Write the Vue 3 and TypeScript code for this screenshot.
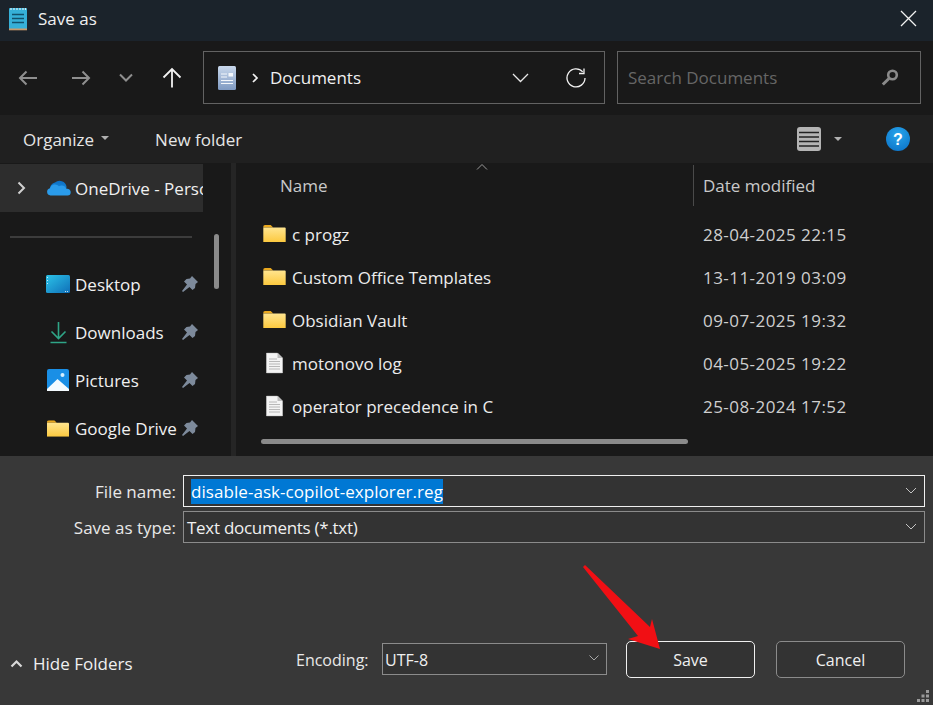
<script setup lang="ts">
const places = [
  { name: 'Desktop', icon: 'desktop' },
  { name: 'Downloads', icon: 'downloads' },
  { name: 'Pictures', icon: 'pictures' },
  { name: 'Google Drive', icon: 'folder' },
]

const files = [
  { name: 'c progz', date: '28-04-2025 22:15', folder: true },
  { name: 'Custom Office Templates', date: '13-11-2019 03:09', folder: true },
  { name: 'Obsidian Vault', date: '09-07-2025 19:32', folder: true },
  { name: 'motonovo log', date: '04-05-2025 19:22', folder: false },
  { name: 'operator precedence in C', date: '25-08-2024 17:52', folder: false },
]
</script>

<template>
  <div class="dialog">
    <svg width="0" height="0" class="defs">
      <defs>
        <linearGradient id="folderFill" x1="0" y1="0" x2="0" y2="1">
          <stop offset="0" stop-color="#ffe58f" />
          <stop offset="1" stop-color="#fcc93f" />
        </linearGradient>
        <linearGradient id="cloudFill" x1="0" y1="0" x2="0" y2="1">
          <stop offset="0" stop-color="#0c6fc4" />
          <stop offset="1" stop-color="#1b8ede" />
        </linearGradient>
        <linearGradient id="desktopFill" x1="0" y1="0" x2="1" y2="1">
          <stop offset="0" stop-color="#2cc3e8" />
          <stop offset="1" stop-color="#0f6fb8" />
        </linearGradient>
        <linearGradient id="docFill" x1="0" y1="0" x2="0" y2="1">
          <stop offset="0" stop-color="#c9d8ec" />
          <stop offset="1" stop-color="#7f9ac2" />
        </linearGradient>
        <radialGradient id="helpFill" cx="0.5" cy="0.3" r="0.8">
          <stop offset="0" stop-color="#27a5ec" />
          <stop offset="1" stop-color="#0b72c7" />
        </radialGradient>
        <symbol id="folder" viewBox="0 0 24 18">
          <path d="M0 2C0 .8.8 0 2 0h6l2.600 2.600H0z" fill="#e9a81f" />
          <path d="M0 2.600h23c.6 0 1 .4 1 1V18H0z" fill="url(#folderFill)" />
        </symbol>
        <symbol id="pin" viewBox="0 0 16 16">
          <path d="M10 0l6 6-2.500 2-.5 4-2.500 2-3-3L1 16l-1-1 5-6.500-3-3L4.500 3 8 2.500z" fill="#7d8a9b" />
        </symbol>
        <symbol id="doc" viewBox="0 0 17 21">
          <path d="M.5.5h11l5 5v15H.5z" fill="#f4f4f4" stroke="#c4c4c4" stroke-width=".7" />
          <path d="M11.500.5v5h5z" fill="#bdbdbd" />
          <path d="M3 6.500h8M3 9h11M3 11.500h11M3 14h11M3 16.500h11" stroke="#a8a8a8" stroke-width=".8" />
        </symbol>
      </defs>
    </svg>

    <header class="title-bar">
      <svg class="app-icon" width="20" height="24" viewBox="0 0 20 24">
        <rect x="1" y="1" width="18" height="22" rx="1" fill="#36b0d8" />
        <rect x="1" y="21.500" width="18" height="1.800" fill="#c99a6b" />
        <path d="M3 1v2M6 1v2M9 1v2M12 1v2M15 1v2M17.500 1v2" stroke="#d8eef5" stroke-width="1.200" />
        <path d="M4 7.500h12M4 11.500h12M4 15.500h12" stroke="#11506b" stroke-width="1.300" />
      </svg>
      <span class="title">Save as</span>
      <svg class="close" width="17" height="17" viewBox="0 0 17 17">
        <path d="M1 1l15 15M16 1L1 16" stroke="#f2f2f2" stroke-width="1.300" fill="none" />
      </svg>
    </header>

    <div class="nav-bar">
      <div class="nav-buttons">
        <svg class="nav-back" width="20" height="16" viewBox="0 0 20 16">
          <path d="M19 8H2M8.500 1.500L2 8l6.500 6.500" stroke="#8f8f8f" stroke-width="2" fill="none" />
        </svg>
        <svg class="nav-forward" width="20" height="16" viewBox="0 0 20 16">
          <path d="M1 8h17M11.500 1.500L18 8l-6.500 6.500" stroke="#8f8f8f" stroke-width="2" fill="none" />
        </svg>
        <svg class="nav-down" width="14" height="9" viewBox="0 0 14 9">
          <path d="M1 1.500l6 6 6-6" stroke="#8f8f8f" stroke-width="2" fill="none" />
        </svg>
        <svg class="nav-up" width="20" height="21" viewBox="0 0 20 21">
          <path d="M10 20.500V2M1.500 10.500L10 2l8.500 8.500" stroke="#f2f2f2" stroke-width="1.800" fill="none" />
        </svg>
      </div>
      <div class="address">
        <svg width="18" height="24" viewBox="0 0 18 24">
          <rect width="18" height="24" rx="1.500" fill="url(#docFill)" />
          <rect x="10.500" y="7" width="4.500" height="3.500" fill="#f4f7fb" />
          <path d="M3 8h6M3 11h6M3 14.500h12M3 17.500h12" stroke="#f4f7fb" stroke-width="1" />
        </svg>
        <svg class="crumb" width="7" height="10" viewBox="0 0 7 10">
          <path d="M1 1l4 4-4 4" stroke="#f2f2f2" stroke-width="1.700" fill="none" />
        </svg>
        <span class="address-text">Documents</span>
        <svg class="address-chevron" width="17" height="10" viewBox="0 0 17 10">
          <path d="M1 1l7.500 7.500L16 1" stroke="#e8e8e8" stroke-width="1.300" fill="none" />
        </svg>
        <svg class="refresh" width="20" height="20" viewBox="0 0 20 20">
          <path d="M16.700 3.900A9 9 0 1 0 19 10" stroke="#f2f2f2" stroke-width="1.300" fill="none" />
          <path d="M18 .5v5h-5" stroke="#f2f2f2" stroke-width="1.300" fill="none" />
        </svg>
      </div>
      <div class="search">
        <span class="search-text">Search Documents</span>
        <svg width="18" height="17" viewBox="0 0 18 17">
          <circle cx="11.500" cy="6" r="4.300" stroke="#8a8a8a" stroke-width="2.600" fill="none" />
          <path d="M8 9.500L1.800 15.500" stroke="#8a8a8a" stroke-width="3" />
        </svg>
      </div>
    </div>

    <div class="command-bar">
      <span class="command">Organize</span>
      <i class="caret organize-caret"></i>
      <span class="command new-folder">New folder</span>
      <svg class="view-icon" width="24" height="24" viewBox="0 0 24 24">
        <rect width="24" height="24" rx="3" fill="#b4b4b4" />
        <path d="M2 5.500h20M2 10h20M2 14.500h20M2 19h20" stroke="#222" stroke-width="1.300" />
      </svg>
      <i class="caret view-caret"></i>
      <svg class="help" width="24" height="24" viewBox="0 0 24 24">
        <circle cx="12" cy="12" r="12" fill="url(#helpFill)" />
        <text x="12" y="17.500" text-anchor="middle" class="help-mark">?</text>
      </svg>
    </div>

    <main class="browser">
      <aside class="sidebar">
        <div class="side-list">
          <div class="one-drive">
            <svg class="expand" width="9" height="14" viewBox="0 0 9 14">
              <path d="M1.500 1.500L7 7l-5.500 5.500" stroke="#d0d0d0" stroke-width="2" fill="none" />
            </svg>
            <svg class="cloud" width="25" height="16" viewBox="0 0 25 16">
              <path d="M4 10A6.500 6.500 0 0 1 9 2.500 7 7 0 0 1 20.500 6.500L20 13H5z" fill="url(#cloudFill)" />
              <path d="M4.500 15.500A3.700 3.700 0 0 1 4 8.200 5.200 5.200 0 0 1 13 6.300 5 5 0 0 1 20.300 8.800 3.400 3.400 0 0 1 24.700 12.300 3.200 3.200 0 0 1 21.500 15.500z" fill="#2a9bea" />
            </svg>
            <span class="one-drive-name">OneDrive - Personal</span>
          </div>
          <hr class="side-rule" />
          <div v-for="place in places" :key="place.name" class="place">
            <span class="place-icon">
              <svg v-if="place.icon === 'desktop'" width="24" height="18" viewBox="0 0 24 18">
                <rect width="24" height="18" rx="1.500" fill="url(#desktopFill)" />
                <path d="M1.500 2v.8M1.500 5v.8M1.500 8v.8M19.500 16v.8M21.500 16v.8" stroke="#eaf8ff" stroke-width="1" />
              </svg>
              <svg v-else-if="place.icon === 'downloads'" width="17" height="23" viewBox="0 0 17 23">
                <path d="M8.500 1v16M1.500 10.500l7 7 7-7M.5 21.500h16" stroke="#2fa587" stroke-width="1.600" fill="none" />
              </svg>
              <svg v-else-if="place.icon === 'pictures'" width="22" height="22" viewBox="0 0 22 22">
                <rect width="22" height="22" rx="2" fill="#1a8fe6" />
                <circle cx="15.500" cy="6" r="2" fill="#d6efff" />
                <path d="M0 20l10.500-10L22 20v2H0z" fill="#f4fbff" />
              </svg>
              <svg v-else width="22" height="17" viewBox="0 0 24 18">
                <use href="#folder" />
              </svg>
            </span>
            <span class="place-name">{{ place.name }}</span>
            <svg class="pin" width="16" height="16" viewBox="0 0 16 16">
              <use href="#pin" />
            </svg>
          </div>
        </div>
        <div class="side-track">
          <div class="side-thumb"></div>
        </div>
      </aside>

      <section class="files">
        <div class="file-header">
          <span class="col-name">Name</span>
          <svg class="sort" width="12" height="6" viewBox="0 0 12 6">
            <path d="M1 5.500l5-5 5 5" stroke="#9a9a9a" stroke-width="1" fill="none" />
          </svg>
          <span class="col-date">Date modified</span>
        </div>
        <ul class="file-list">
          <li v-for="file in files" :key="file.name" class="file-row">
            <span class="file-icon">
              <svg v-if="file.folder" width="23" height="17" viewBox="0 0 24 18">
                <use href="#folder" />
              </svg>
              <svg v-else width="17" height="22" viewBox="0 0 17 21">
                <use href="#doc" />
              </svg>
            </span>
            <span class="file-name">{{ file.name }}</span>
            <span class="file-date">{{ file.date }}</span>
          </li>
        </ul>
        <div class="h-thumb"></div>
      </section>
    </main>

    <footer class="bottom">
      <div class="form-row">
        <label>File name:</label>
        <div class="field focused">
          <span class="selected">disable-ask-copilot-explorer.reg</span>
          <svg class="drop" width="12" height="7" viewBox="0 0 12 7">
            <path d="M1 1l5 5 5-5" stroke="#c4c4c4" stroke-width="1" fill="none" />
          </svg>
        </div>
      </div>
      <div class="form-row second">
        <label>Save as type:</label>
        <div class="field">
          <span class="type-text">Text documents (*.txt)</span>
          <svg class="drop" width="12" height="7" viewBox="0 0 12 7">
            <path d="M1 1l5 5 5-5" stroke="#c4c4c4" stroke-width="1" fill="none" />
          </svg>
        </div>
      </div>

      <div class="actions">
        <div class="hide-folders">
          <svg width="13" height="9" viewBox="0 0 13 9">
            <path d="M1.500 7.500l5-5 5 5" stroke="#d8d8d8" stroke-width="2.200" fill="none" />
          </svg>
          <span>Hide Folders</span>
        </div>
        <label class="encoding-label">Encoding:</label>
        <div class="field encoding">
          <span>UTF-8</span>
          <svg class="drop" width="10" height="6" viewBox="0 0 10 6">
            <path d="M.5.5L5 5 9.500.5" stroke="#a8a8a8" stroke-width="1" fill="none" />
          </svg>
        </div>
        <button class="btn primary">Save</button>
        <button class="btn">Cancel</button>
      </div>

      <svg class="grip" width="12" height="12" viewBox="0 0 12 12">
        <path d="M9 0h3v3H9zM4.500 4.500h3v3h-3zM9 4.500h3v3H9zM0 9h3v3H0zM4.500 9h3v3h-3zM9 9h3v3H9z" fill="#9a9a9a" />
      </svg>
    </footer>

    <svg class="arrow" width="80" height="90" viewBox="0 0 80 90">
      <path d="M0 1L2 -1L67 61L69 53L77 83L45 73L55 70z" fill="#f10f14" />
    </svg>
  </div>
</template>

<style>
html,
body {
  margin: 0;
  background: #383838;
}
</style>

<style scoped>
.dialog {
  position: relative;
  width: 933px;
  height: 705px;
  overflow: hidden;
  display: flex;
  flex-direction: column;
  font-family: "Open Sans", "Noto Sans", sans-serif;
  font-size: 17px;
  color: #f0f0f0;
  background: #383838;
}

.defs {
  position: absolute;
}

.title-bar {
  height: 41px;
  flex: none;
  display: flex;
  align-items: center;
  padding: 0 16px 4px 8px;
  box-sizing: border-box;
  background: #1b232b;
}

.app-icon {
  margin-right: 10px;
}

.title {
  font-size: 17px;
}

.close {
  margin-left: auto;
}

.nav-bar {
  height: 74px;
  flex: none;
  display: flex;
  align-items: flex-start;
  padding: 10px 12px 0 0;
  box-sizing: border-box;
  background: #191919;
}

.nav-buttons {
  width: 203px;
  height: 53px;
  flex: none;
  display: flex;
  align-items: center;
}

.nav-back {
  margin-left: 18px;
}

.nav-forward {
  margin-left: 33px;
}

.nav-down {
  margin-left: 28px;
}

.nav-up {
  margin-left: 29px;
}

.address,
.search {
  height: 53px;
  box-sizing: border-box;
  border: 1px solid #626262;
  display: flex;
  align-items: center;
}

.address {
  width: 402px;
  padding: 0 18px 0 14px;
}

.crumb {
  margin-left: 16px;
}

.address-text {
  margin-left: 11px;
}

.address-chevron {
  margin-left: auto;
  margin-right: 37px;
}

.search {
  width: 304px;
  margin-left: 12px;
  padding: 0 21px 0 10px;
  justify-content: space-between;
}

.search-text {
  color: #666;
}

.command-bar {
  height: 48px;
  flex: none;
  display: flex;
  align-items: center;
  background: #202020;
}

.command {
  color: #e6e6e6;
}

.command:first-child {
  margin-left: 23px;
}

.caret {
  width: 0;
  height: 0;
  border-left: 4px solid transparent;
  border-right: 4px solid transparent;
  border-top: 4px solid #b0b0b0;
}

.organize-caret {
  margin-left: 7px;
  margin-bottom: 3px;
}

.new-folder {
  margin-left: 46px;
}

.view-icon {
  margin-left: auto;
}

.view-caret {
  margin-left: 13px;
}

.help {
  margin-left: 44px;
  margin-right: 23px;
}

.help-mark {
  font: 700 16px "Liberation Sans", sans-serif;
  fill: #ffffff;
}

.browser {
  height: 293px;
  flex: none;
  display: flex;
  background: #191919;
}

.sidebar {
  width: 236px;
  flex: none;
  display: flex;
  box-sizing: border-box;
  border-right: 5px solid #252525;
}

.side-list {
  width: 203px;
  flex: none;
  overflow: hidden;
}

.one-drive {
  height: 48px;
  margin-top: 1px;
  display: flex;
  align-items: center;
  white-space: nowrap;
  background: #2d2d2d;
}

.expand {
  flex: none;
  margin-left: 17px;
  margin-right: 20px;
}

.cloud {
  flex: none;
}

.one-drive-name {
  flex: none;
  margin-left: 4px;
}

.side-rule {
  margin: 24px 11px 22px 10px;
  height: 2px;
  border: 0;
  background: #3c3c3c;
}

.place {
  height: 48px;
  display: flex;
  align-items: center;
}

.place-icon {
  width: 26px;
  margin-left: 45px;
  display: flex;
  justify-content: center;
}

.place-name {
  margin-left: 4px;
  white-space: nowrap;
}

.pin {
  margin-left: auto;
  margin-right: 5px;
  flex: none;
}

.side-track {
  position: relative;
  flex: 1;
}

.side-thumb {
  width: 5px;
  height: 55px;
  margin: 71px 0 0 11px;
  border-radius: 3px;
  background: #8a8a8a;
}

.files {
  flex: 1;
  min-width: 0;
  position: relative;
}

.file-header {
  height: 42px;
  margin-top: 1px;
  display: flex;
  align-items: center;
  position: relative;
  color: #c9c9c9;
}

.col-name {
  margin-left: 44px;
}

.sort {
  position: absolute;
  left: 240px;
  top: 0;
}

.col-date {
  position: absolute;
  left: 457px;
  padding-left: 9px;
  height: 41px;
  line-height: 41px;
  border-left: 1px solid #4a4a4a;
  white-space: nowrap;
}

.file-list {
  list-style: none;
  margin: 7px 0 0;
  padding: 0;
}

.file-row {
  height: 43px;
  display: flex;
  align-items: center;
}

.file-icon {
  width: 24px;
  margin-left: 26px;
  margin-bottom: 2px;
  display: flex;
  justify-content: center;
}

.file-name {
  width: 411px;
  margin-left: 6px;
  color: #ececec;
}

.file-date {
  color: #cfcfcf;
  white-space: nowrap;
  letter-spacing: 0.45px;
}

.h-thumb {
  width: 427px;
  height: 5px;
  margin: 11px 0 0 25px;
  border-radius: 3px;
  background: #8a8a8a;
}

.bottom {
  flex: 1;
  position: relative;
  padding-top: 19px;
  background: #383838;
}

.form-row {
  height: 32px;
  display: flex;
  align-items: center;
}

.form-row.second {
  margin-top: 4px;
}

.form-row label {
  width: 176px;
  flex: none;
  text-align: right;
  color: #e8e8e8;
}

.field {
  position: relative;
  height: 100%;
  box-sizing: border-box;
  display: flex;
  align-items: center;
  border: 1px solid #8b8b8b;
  padding-left: 3px;
  background: #333333;
}

.form-row .field {
  width: 742px;
  margin-left: 7px;
}

.focused {
  border-color: #f0f0f0;
  padding-left: 7px;
}

.selected {
  background: #0078d4;
  color: #ffffff;
  line-height: 25px;
  letter-spacing: 0.06px;
}

.type-text {
  letter-spacing: -0.28px;
}

.drop {
  position: absolute;
  right: 7px;
  top: 11px;
}

.actions {
  display: flex;
  align-items: flex-start;
  margin-top: 98px;
}

.hide-folders {
  display: flex;
  align-items: center;
  width: 296px;
  height: 44px;
  box-sizing: border-box;
  padding: 0 0 0 10px;
  gap: 10px;
  font-size: 17px;
}

.encoding-label {
  width: 82px;
  margin-top: 6px;
  font-size: 16px;
  color: #e8e8e8;
  line-height: 27px;
}

.encoding {
  width: 225px;
  height: 32px;
  margin: 2px 0 0 4px;
  padding: 1px 0 0 2px;
  font-size: 16px;
}

.btn {
  width: 129px;
  height: 37px;
  margin-left: 21px;
  box-sizing: border-box;
  border: 1px solid #8b8b8b;
  border-radius: 5px;
  background: #333333;
  color: #f0f0f0;
  font: inherit;
  font-size: 16px;
}

.btn.primary {
  margin-left: 19px;
  border-color: #f0f0f0;
}

.grip {
  position: absolute;
  right: 4px;
  bottom: 3px;
}

.arrow {
  position: absolute;
  left: 583px;
  top: 566px;
  overflow: visible;
}
</style>
